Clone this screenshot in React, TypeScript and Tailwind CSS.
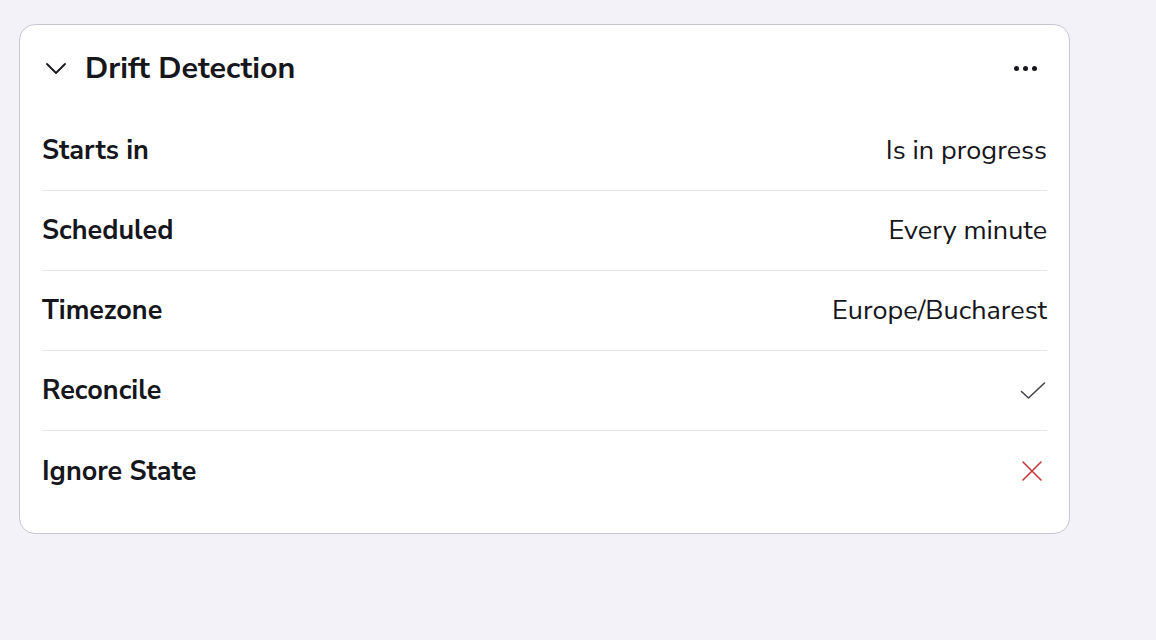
const rows: { label: string; value: string | "check" | "cross" }[] = [
  { label: "Starts in", value: "Is in progress" },
  { label: "Scheduled", value: "Every minute" },
  { label: "Timezone", value: "Europe/Bucharest" },
  { label: "Reconcile", value: "check" },
  { label: "Ignore State", value: "cross" },
];

const CheckIcon = () => (
  <svg width="26" height="20" viewBox="0 0 26 20" fill="none">
    <path d="M1.5 10.5 L8.5 17 L24.5 2" stroke="#44444c" strokeWidth="1.6" strokeLinecap="round" strokeLinejoin="round" />
  </svg>
);

const CrossIcon = () => (
  <svg width="22" height="22" viewBox="0 0 22 22" fill="none">
    <path d="M2 2 L20 20 M20 2 L2 20" stroke="#c3373a" strokeWidth="1.6" strokeLinecap="round" />
  </svg>
);

export default function App() {
  return (
    <div className="min-h-screen w-full bg-[#f3f2f8] pt-[24px] pl-[19px] font-['Nunito_Sans','Lato',sans-serif] text-[#16161d]">
      <div className="w-[1051px] rounded-[16px] border border-[#c8c7d2] bg-white px-[22px] pb-[22px]">
        <div className="flex h-[86px] items-center justify-between">
          <div className="flex items-center">
            <svg width="24" height="24" viewBox="0 0 24 24" fill="none" className="ml-[2px]">
              <path d="M3 8 L12 17 L21 8" stroke="#16161d" strokeWidth="1.8" strokeLinecap="round" strokeLinejoin="round" />
            </svg>
            <h1 className="ml-[17px] pt-[2px] text-[30.5px] font-bold">Drift Detection</h1>
          </div>
          <div className="mr-[10px] flex items-center gap-[4px]">
            <span className="h-[5px] w-[5px] rounded-full bg-[#16161d]" />
            <span className="h-[5px] w-[5px] rounded-full bg-[#16161d]" />
            <span className="h-[5px] w-[5px] rounded-full bg-[#16161d]" />
          </div>
        </div>
        {rows.map((r, i) => (
          <div
            key={r.label}
            className={`flex h-[80px] items-center justify-between ${i < rows.length - 1 ? "border-b border-[#e6e5ec]" : ""}`}
          >
            <span className="pt-[2px] text-[27px] font-bold">{r.label}</span>
            {r.value === "check" ? (
              <span className="mr-[1px] flex items-center"><CheckIcon /></span>
            ) : r.value === "cross" ? (
              <span className="mr-[4px] flex items-center"><CrossIcon /></span>
            ) : (
              <span className="pt-[2px] text-[27px]">{r.value}</span>
            )}
          </div>
        ))}
      </div>
    </div>
  );
}
